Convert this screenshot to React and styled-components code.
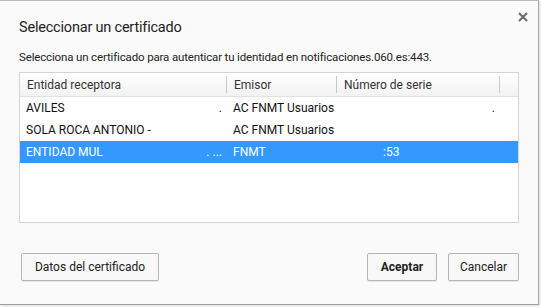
import React from "react";
import styled, { createGlobalStyle } from "styled-components";

const GlobalStyle = createGlobalStyle`
  html, body {
    margin: 0;
    padding: 0;
    background: #ffffff;
  }
  body {
    font-family: "Segoe UI", Roboto, "Noto Sans", sans-serif;
  }
`;

const rows = [
  { entidad: "AVILES", entDots: ".", emisor: "AC FNMT Usuarios", serie: "", serieEnd: "." },
  { entidad: "SOLA ROCA ANTONIO -", entDots: "", emisor: "AC FNMT Usuarios", serie: "", serieEnd: "" },
  { entidad: "ENTIDAD MUL", entDots: ". ...", emisor: "FNMT", serie: ":53", serieEnd: "", selected: true },
];

export default function App() {
  return (
    <>
      <GlobalStyle />
      <Page>
        <Dialog>
          <Header>
            <Title>Seleccionar un certificado</Title>
            <CloseButton aria-label="Cerrar">
              <svg width="10" height="10" viewBox="0 0 10 10">
                <path d="M1 1 L9 9 M9 1 L1 9" stroke="#6a6a6a" strokeWidth="2" />
              </svg>
            </CloseButton>
          </Header>
          <Description>
            Selecciona un certificado para autenticar tu identidad en notificaciones.060.es:443.
          </Description>
          <Table>
            <HeadRow>
              <HeadCell>Entidad receptora</HeadCell>
              <HeadCell>Emisor</HeadCell>
              <HeadCell>Número de serie</HeadCell>
              <HeadCell $last />
            </HeadRow>
            {rows.map((r) => (
              <Row key={r.entidad} $selected={r.selected}>
                <Cell $split>
                  <span>{r.entidad}</span>
                  <span>{r.entDots}</span>
                </Cell>
                <Cell>{r.emisor}</Cell>
                <Cell $split>
                  <SerieText>{r.serie}</SerieText>
                  <span>{r.serieEnd}</span>
                </Cell>
                <Cell />
              </Row>
            ))}
          </Table>
          <Footer>
            <Button>Datos del certificado</Button>
            <ButtonGroup>
              <Button $primary $width="70px">Aceptar</Button>
              <Button $width="71px">Cancelar</Button>
            </ButtonGroup>
          </Footer>
        </Dialog>
      </Page>
    </>
  );
}

const Page = styled.div`
  width: 541px;
  height: 308px;
  overflow: hidden;
  background: #ffffff;
`;

const Dialog = styled.div`
  box-sizing: border-box;
  width: 539px;
  height: 305px;
  background: #fafafa;
  border-top: 1px solid #b9b9b9;
  border-right: 1px solid #a8a8a8;
  border-bottom: 1px solid #a0a0a0;
  box-shadow: 1px 1px 2px rgba(0, 0, 0, 0.15);
  padding: 0 20px 0 19px;
  display: flex;
  flex-direction: column;
  color: #222;
`;

const Header = styled.div`
  display: flex;
  justify-content: space-between;
  align-items: flex-start;
  height: 45px;
`;

const Title = styled.h1`
  margin: 16px 0 0 0;
  font-size: 14.5px;
  letter-spacing: -0.2px;
  font-weight: 400;
  color: #222;
  line-height: 22px;
`;

const CloseButton = styled.button`
  margin: 11px -10px 0 0;
  padding: 0;
  width: 10px;
  height: 10px;
  border: none;
  background: none;
  display: flex;
`;

const Description = styled.p`
  margin: 2px 0 0 0;
  font-size: 11.5px;
  letter-spacing: -0.15px;
  line-height: 18px;
  height: 24px;
  color: #222;
`;

const Table = styled.div`
  box-sizing: border-box;
  width: 500px;
  height: 151px;
  border: 1px solid #d4d4d4;
  background: #ffffff;
  font-size: 12px;
`;

const columns = "207px 110px 163px 1fr";

const HeadRow = styled.div`
  display: grid;
  grid-template-columns: ${columns};
  height: 23px;
  background: linear-gradient(#ffffff, #f2f2f2);
  border-bottom: 1px solid #e2e2e2;
  color: #333;
`;

const HeadCell = styled.div`
  display: flex;
  align-items: center;
  padding-left: ${(p) => (p.$last ? "0" : "7px")};
  border-right: ${(p) => (p.$last ? "none" : "1px solid #c8c8c8")};
  margin: 3px 0;
  box-sizing: border-box;
  white-space: nowrap;
`;

const Row = styled.div`
  display: grid;
  grid-template-columns: ${columns};
  height: 22px;
  background: ${(p) => (p.$selected ? "#3399ff" : "transparent")};
  color: ${(p) => (p.$selected ? "#ffffff" : "#111")};
`;

const Cell = styled.div`
  display: flex;
  align-items: center;
  justify-content: ${(p) => (p.$split ? "space-between" : "flex-start")};
  padding: 0 5px 0 6px;
  white-space: nowrap;
  overflow: hidden;
`;

const SerieText = styled.span`
  padding-left: 40px;
`;

const Footer = styled.div`
  display: flex;
  justify-content: space-between;
  align-items: center;
  margin-top: 30px;
  padding-left: 2px;
  width: 498px;
`;

const ButtonGroup = styled.div`
  display: flex;
  gap: 11px;
`;

const Button = styled.button`
  box-sizing: border-box;
  height: 28px;
  width: ${(p) => p.$width || "138px"};
  padding: 0 10px;
  border: 1px solid #b5b5b5;
  border-radius: 2px;
  background: #f8f8f8;
  box-shadow: 0 1px 0 rgba(0, 0, 0, 0.08);
  font-family: "Segoe UI", Roboto, "Noto Sans", sans-serif;
  font-size: 12px;
  font-weight: ${(p) => (p.$primary ? 700 : 400)};
  color: #222;
`;
